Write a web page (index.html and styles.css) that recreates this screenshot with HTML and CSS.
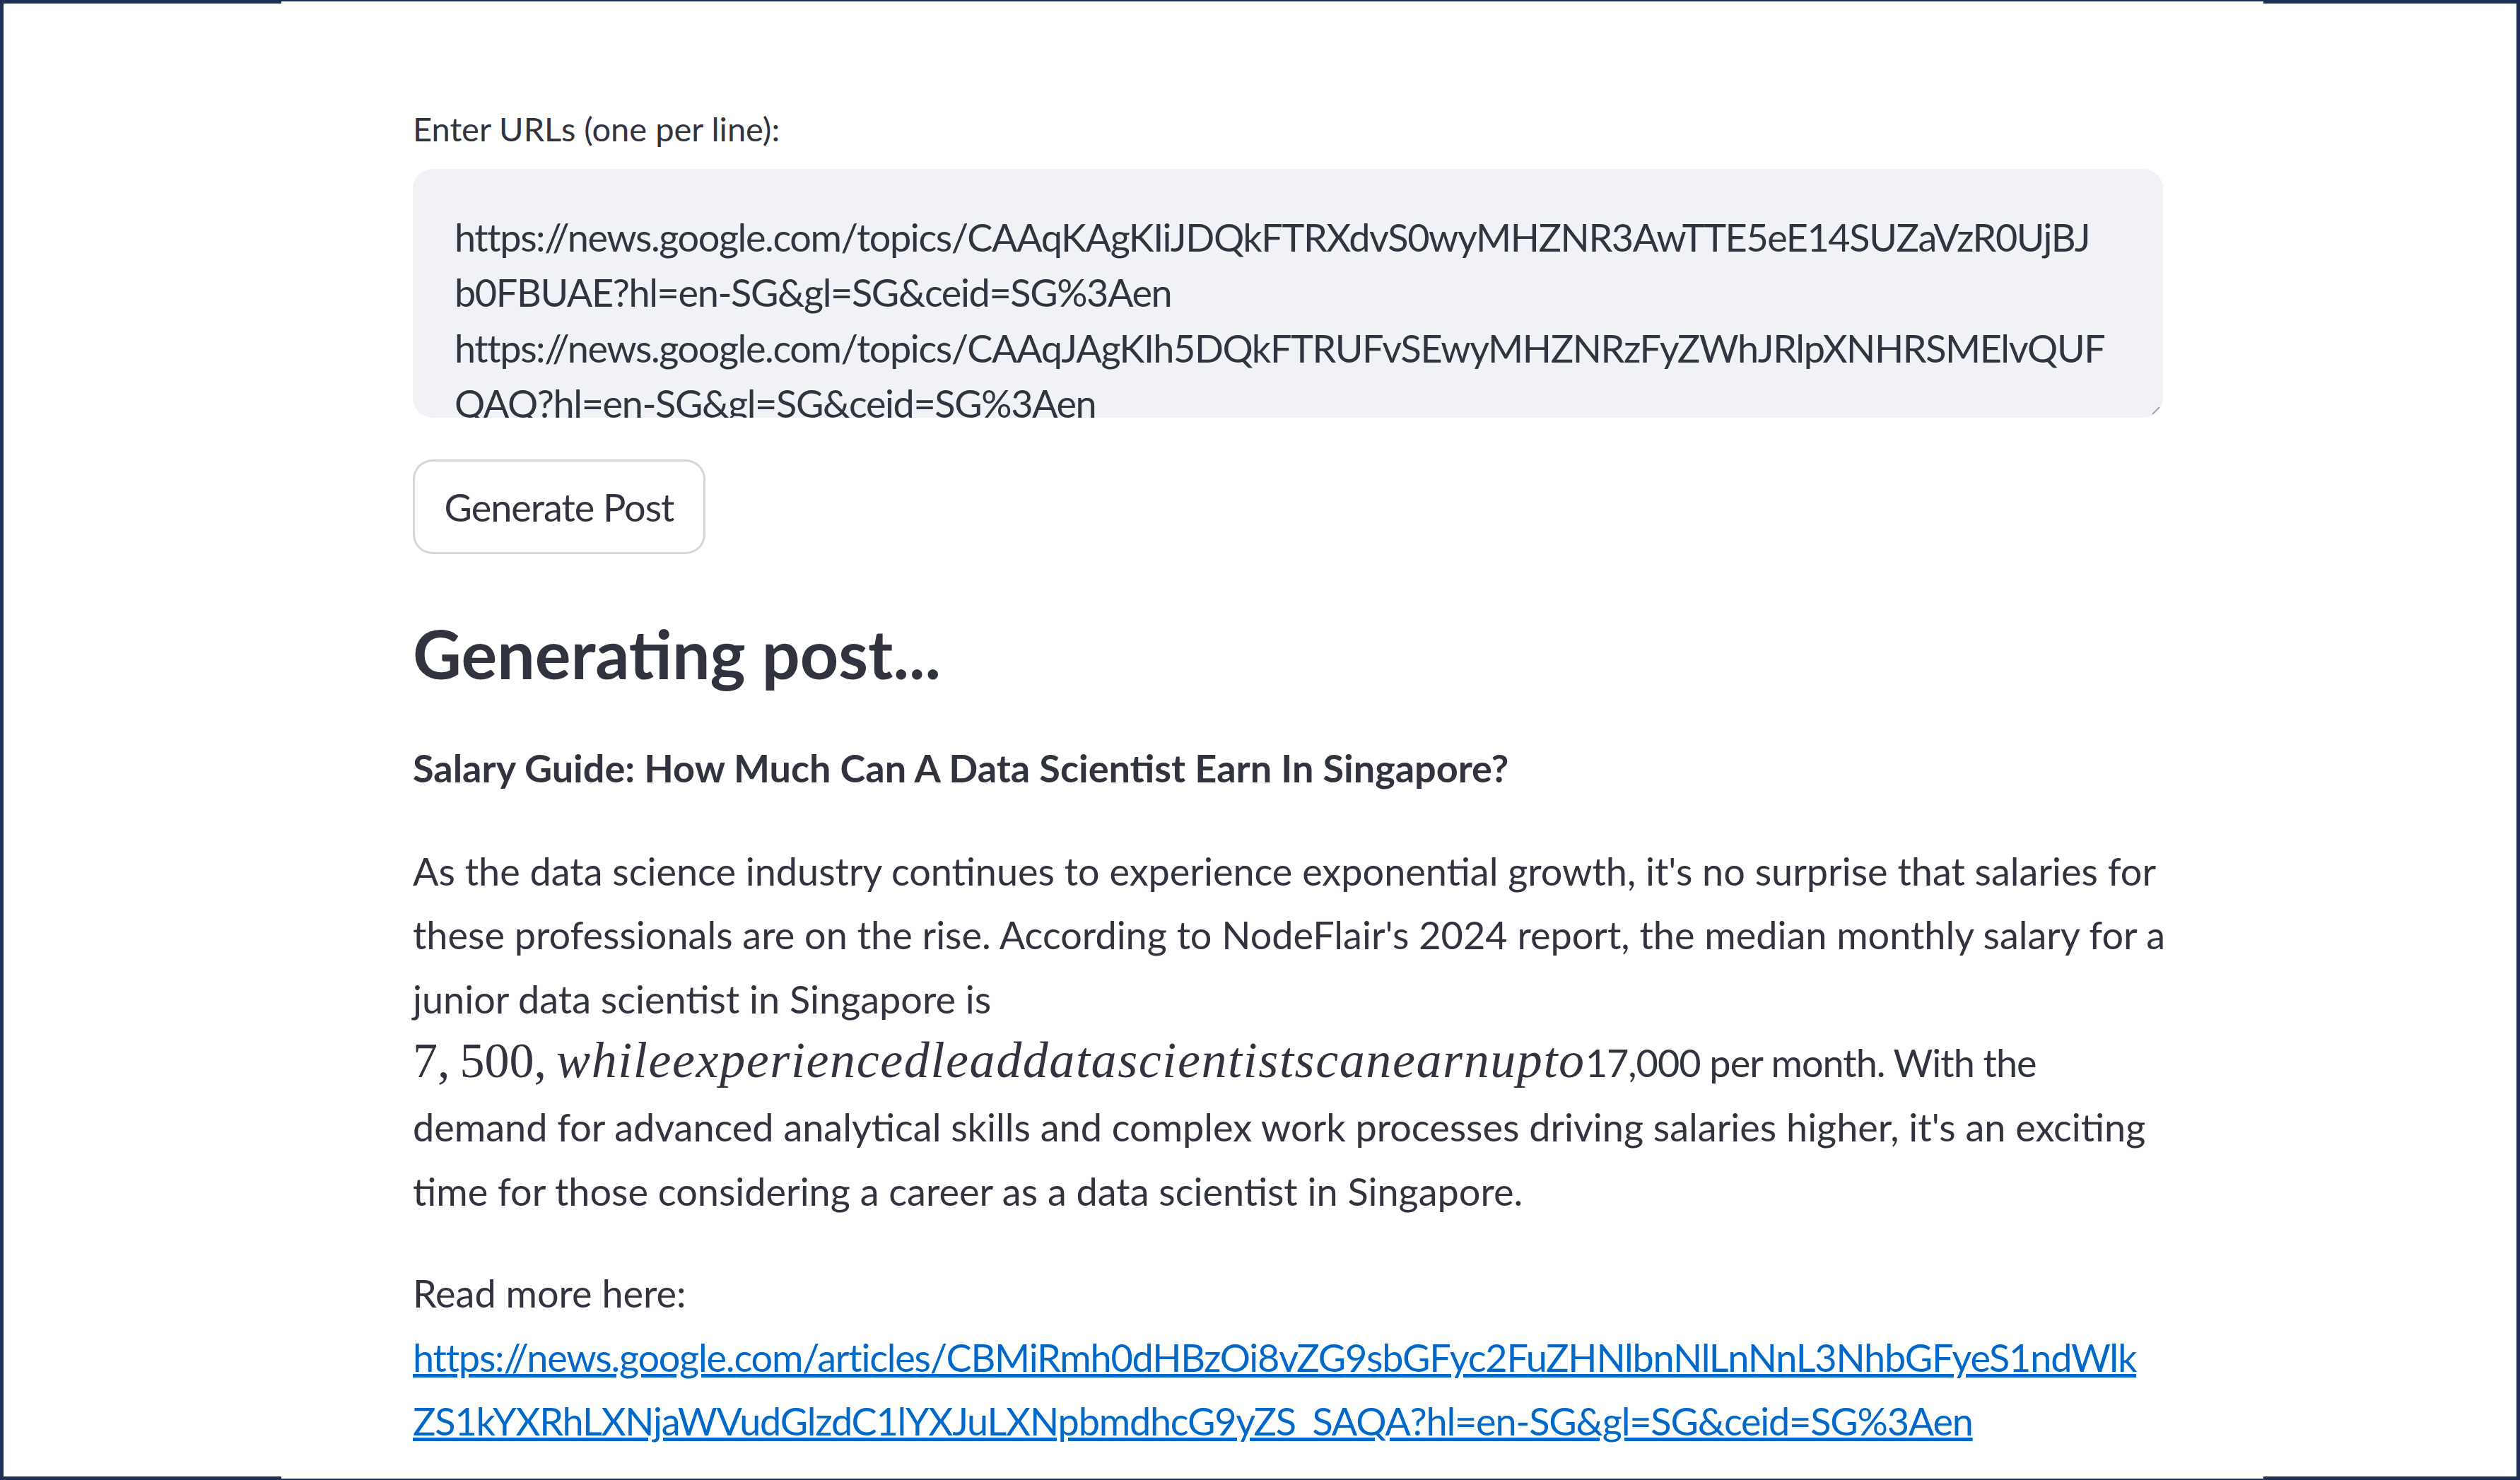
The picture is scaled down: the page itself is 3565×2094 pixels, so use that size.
FILE: index.html
```html
<!DOCTYPE html>
<html lang="en">
<head>
<meta charset="utf-8">
<title>Generate Post</title>
<link rel="stylesheet" href="styles.css">
</head>
<body>
<div class="frame">
  <main class="column">
    <label class="field-label" for="urls">Enter URLs (one per line):</label>
    <div class="textarea" id="urls" role="textbox" aria-multiline="true">
      <div class="ta-line">https://news.google.com/topics/CAAqKAgKIiJDQkFTRXdvS0wyMHZNR3AwTTE5eE14SUZaVzR0UjBJ</div>
      <div class="ta-line">b0FBUAE?hl=en-SG&amp;gl=SG&amp;ceid=SG%3Aen</div>
      <div class="ta-line">https://news.google.com/topics/CAAqJAgKIh5DQkFTRUFvSEwyMHZNRzFyZWhJRlpXNHRSMElvQUF</div>
      <div class="ta-line">QAQ?hl=en-SG&amp;gl=SG&amp;ceid=SG%3Aen</div>
      <svg class="resize" width="14" height="14" viewBox="0 0 14 14"><path d="M13 3 L3 13 M13 8 L8 13" stroke="#8a8d96" stroke-width="1.5" fill="none"/></svg>
    </div>
    <button class="btn" type="button">Generate Post</button>
    <h2 class="heading">Generating post...</h2>
    <p class="title"><strong>Salary Guide: How Much Can A Data Scientist Earn In Singapore?</strong></p>
    <p class="post">As the data science industry continues to experience exponential growth, it's no surprise that salaries for<br>these professionals are on the rise. According to NodeFlair's 2024 report, the median monthly salary for a<br>junior data scientist in Singapore is<br><span class="katex"><span class="mn">7,&thinsp;500,&thinsp;</span><span class="mi">whileexperiencedleaddatascientistscanearnupto</span></span><span class="after-math">17,000 per month. With the</span><br>demand for advanced analytical skills and complex work processes driving salaries higher, it's an exciting<br>time for those considering a career as a data scientist in Singapore.</p>
    <p class="more">Read more here:<br><a class="link" href="#">https://news.google.com/articles/CBMiRmh0dHBzOi8vZG9sbGFyc2FuZHNlbnNlLnNnL3NhbGFyeS1ndWlk<br>ZS1kYXRhLXNjaWVudGlzdC1lYXJuLXNpbmdhcG9yZS_SAQA?hl=en-SG&amp;gl=SG&amp;ceid=SG%3Aen</a></p>
  </main>
</div>
</body>
</html>
```

FILE: styles.css
```css
html, body {
  margin: 0;
  padding: 0;
  background: #ffffff;
}

body {
  font-family: "Lato", "Liberation Sans", sans-serif;
  color: #31333f;
}

.frame {
  box-sizing: border-box;
  width: 3565px;
  height: 2094px;
  overflow: hidden;
  border-left: 5px solid #1d2f55;
  border-right: 5px solid #1d2f55;
  background:
    linear-gradient(#1d2f55, #1d2f55) left top / 393px 5px no-repeat,
    linear-gradient(#1d2f55, #1d2f55) right top / 358px 5px no-repeat,
    linear-gradient(#1d2f55, #1d2f55) left top / 100% 2px no-repeat,
    linear-gradient(#1d2f55, #1d2f55) left bottom / 393px 5px no-repeat,
    linear-gradient(#1d2f55, #1d2f55) right bottom / 358px 5px no-repeat,
    linear-gradient(#1d2f55, #1d2f55) left bottom / 100% 2px no-repeat,
    #ffffff;
}

.column {
  display: block;
  margin-left: 579px;
  width: 2600px;
  padding-top: 143px;
}

.field-label {
  display: block;
  font-size: 47px;
  line-height: 78px;
  margin-bottom: 18px;
}

.textarea {
  position: relative;
  box-sizing: border-box;
  width: 2476px;
  height: 352px;
  padding: 58px 59px 0;
  background: #f0f2f6;
  border-radius: 28px;
  overflow: hidden;
  font-size: 54px;
  letter-spacing: -1.4px;
  line-height: 78.4px;
}

.ta-line {
  white-space: nowrap;
}

.resize {
  position: absolute;
  right: 4px;
  bottom: 4px;
}

.btn {
  display: block;
  box-sizing: border-box;
  margin-top: 59px;
  width: 414px;
  height: 134px;
  padding: 0;
  border: 3.5px solid rgba(49, 51, 63, 0.2);
  border-radius: 28px;
  background: #ffffff;
  font-family: "Lato", "Liberation Sans", sans-serif;
  font-size: 54px;
  letter-spacing: -1px;
  color: #31333f;
}

.heading {
  margin: 81px 0 0;
  font-size: 95px;
  line-height: 119px;
  font-weight: 700;
}

.title,
.post,
.more {
  font-size: 54px;
  line-height: 90.6px;
  white-space: nowrap;
}

.title {
  margin: 58px 0 0;
}

.title strong {
  font-weight: 700;
}

.post {
  margin: 55px 0 0;
}

.more {
  margin: 54px 0 0;
}

.katex {
  font-family: "Liberation Serif", "DejaVu Serif", serif;
  line-height: 0;
}

.mn {
  font-size: 70px;
}

.mi {
  font-size: 72px;
  font-style: italic;
  letter-spacing: 1.6px;
}

.after-math {
  letter-spacing: -1px;
}

.link {
  color: #0068c9;
  text-decoration: underline;
  letter-spacing: -1.2px;
}
```
